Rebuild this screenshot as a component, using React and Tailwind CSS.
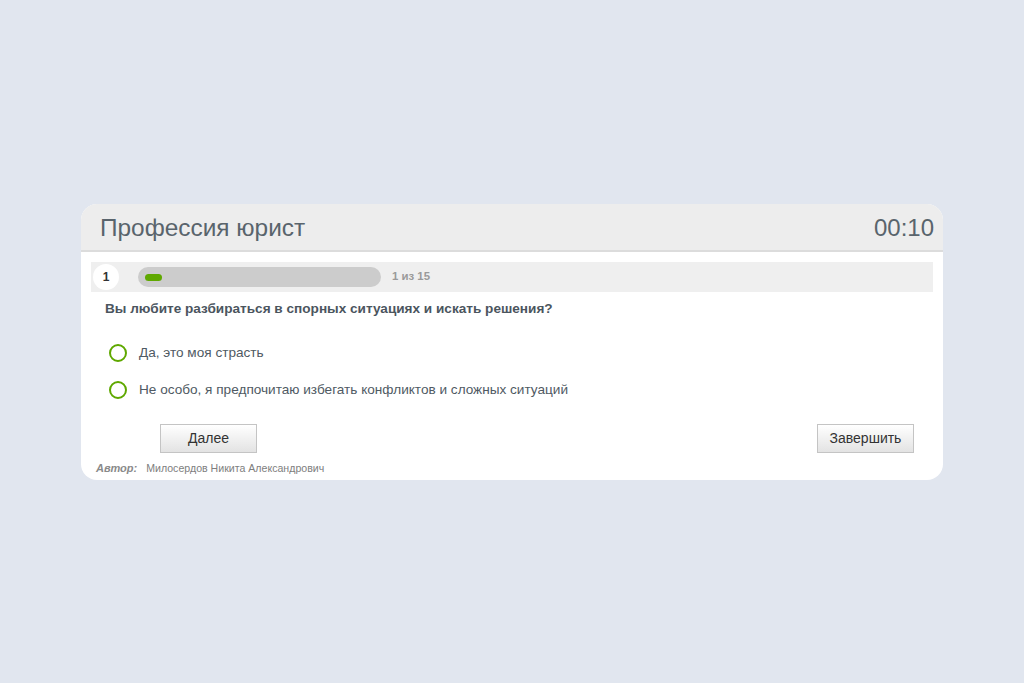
import React from "react";

const answers = [
  "Да, это моя страсть",
  "Не особо, я предпочитаю избегать конфликтов и сложных ситуаций",
];

const App = () => {
  return (
    <div className="min-h-screen w-full bg-[#e1e6ef] flex items-start justify-center pt-[204px] font-['Liberation_Sans',Arial,sans-serif]">
      <div className="w-[862px] bg-white rounded-[16px] overflow-hidden">
        <div className="h-[48px] bg-[#ededed] border-b-2 border-[#dcdcdc] flex items-center justify-between pl-[19px] pr-[9px] pt-[2px]">
          <h1 className="text-[24.4px] text-[#59646c] leading-none">Профессия юрист</h1>
          <span className="text-[24px] text-[#59646c] leading-none">00:10</span>
        </div>
        <div className="px-[10px] pt-[10px]">
          <div className="h-[30px] bg-[#efefef] flex items-center pl-[2px]">
            <div className="w-[26px] h-[26px] rounded-full bg-white flex items-center justify-center text-[12px] font-bold text-[#333]">
              1
            </div>
            <div className="ml-[19px] w-[243px] h-[20px] rounded-full bg-[#cccccc] flex items-center pl-[7px]">
              <div className="w-[17px] h-[7px] rounded-full bg-[#5fa800]" />
            </div>
            <span className="ml-[11px] text-[11.4px] font-bold text-[#9a9a9a]">1 из 15</span>
          </div>
        </div>
        <div className="px-[24px] pt-[7px]">
          <p className="text-[13.6px] font-bold text-[#4b555e]">
            Вы любите разбираться в спорных ситуациях и искать решения?
          </p>
          <div className="mt-[25px] flex flex-col gap-[19px] pl-[4px]">
            {answers.map((a) => (
              <label key={a} className="flex items-center h-[18px]">
                <span className="w-[18px] h-[18px] rounded-full border-2 border-[#5fa800] bg-white" />
                <span className="ml-[12px] text-[13.6px] text-[#4f5a63]">{a}</span>
              </label>
            ))}
          </div>
        </div>
        <div className="flex justify-between pl-[79px] pr-[29px] mt-[25px]">
          <button className="w-[97px] h-[29px] border border-[#c4c4c4] bg-gradient-to-b from-white to-[#e3e3e3] text-[14px] text-[#333]">
            Далее
          </button>
          <button className="w-[97px] h-[29px] border border-[#c4c4c4] bg-gradient-to-b from-white to-[#e3e3e3] text-[14px] text-[#333]">
            Завершить
          </button>
        </div>
        <div className="pl-[15px] pt-[7px] pb-[3px] text-[10.6px] flex items-center">
          <span className="font-bold italic text-[#8a8a8a] text-[11px]">Автор:</span>
          <span className="ml-[9px] text-[#7e7e7e]">Милосердов Никита Александрович</span>
        </div>
      </div>
    </div>
  );
};

export default App;
